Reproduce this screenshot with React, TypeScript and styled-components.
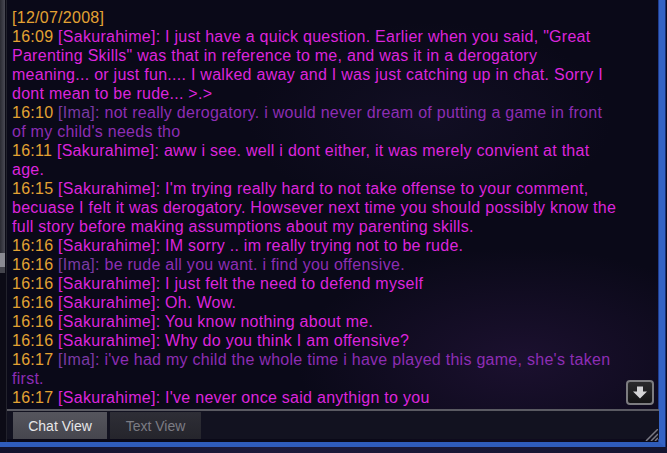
import styled, { createGlobalStyle } from 'styled-components'

type Speaker = 'saku' | 'ima'

interface Line {
  time: string
  who: Speaker
  text: string
}

const lines: Line[] = [
  { time: '16:09', who: 'saku', text: 'I just have a quick question. Earlier when you said, "Great Parenting Skills" was that in reference to me, and was it in a derogatory meaning... or just fun.... I walked away and I was just catching up in chat. Sorry I dont mean to be rude... >.>' },
  { time: '16:10', who: 'ima', text: 'not really derogatory. i would never dream of putting a game in front of my child\'s needs tho' },
  { time: '16:11', who: 'saku', text: 'aww i see. well i dont either, it was merely convient at that age.' },
  { time: '16:15', who: 'saku', text: 'I\'m trying really hard to not take offense to your comment, becuase I felt it was derogatory. Howsever next time you should possibly know the full story before making assumptions about my parenting skills.' },
  { time: '16:16', who: 'saku', text: 'IM sorry .. im really trying not to be rude.' },
  { time: '16:16', who: 'ima', text: 'be rude all you want. i find you offensive.' },
  { time: '16:16', who: 'saku', text: 'I just felt the need to defend myself' },
  { time: '16:16', who: 'saku', text: 'Oh. Wow.' },
  { time: '16:16', who: 'saku', text: 'You know nothing about me.' },
  { time: '16:16', who: 'saku', text: 'Why do you think I am offensive?' },
  { time: '16:17', who: 'ima', text: 'i\'ve had my child the whole time i have played this game, she\'s taken first.' },
  { time: '16:17', who: 'saku', text: 'I\'ve never once said anythign to you' },
]

const names: Record<Speaker, string> = {
  saku: 'Sakurahime',
  ima: 'Ima',
}

const App = () => {
  return (
    <>
      <GlobalStyle />
      <Screen>
        <Window>
          <Gutter>
            <Track />
            <Thumb />
            <TrackEnd />
          </Gutter>

          <Main>
            <Log>
              <Date>[12/07/2008]</Date>
              {lines.map((line, i) => (
                <Message key={i} $who={line.who}>
                  <Time>{line.time}</Time>{' '}
                  <Name $who={line.who}>[{names[line.who]}]</Name>: {line.text}
                </Message>
              ))}

              <ScrollDown>
                <svg width="16" height="13" viewBox="0 0 16 13">
                  <path d="M5 0.5 H11 V5.5 H15 L8 12.5 L1 5.5 H5 Z" fill="#d4d4d6" />
                </svg>
              </ScrollDown>
            </Log>

            <Tabs>
              <Tab $active>Chat View</Tab>
              <Tab>Text View</Tab>
            </Tabs>

            <Grip width="14" height="12" viewBox="0 0 14 12">
              <path d="M2 12 L14 0 M7 12 L14 5 M11 12 L14 9" stroke="#7a7a84" strokeWidth="1.5" />
            </Grip>
          </Main>
        </Window>
        <Footer />
      </Screen>
    </>
  )
}

export default App

const GlobalStyle = createGlobalStyle`
    body {
        margin: 0;
        background: #0d0c20;
    }
`

const Screen = styled.div`
    width: 667px;
    height: 453px;
    display: flex;
    flex-direction: column;
    overflow: hidden;
    font-family: "Liberation Sans", Arial, sans-serif;
`

const Window = styled.div`
    width: 659px;
    height: 442px;
    display: flex;
    border-right: 6px solid #3563c4;
    border-bottom: 5px solid #2f5cbc;
    box-shadow: inset -1px 0 0 #1f3c8e, 1px 0 0 #1b2f74, 0 1px 0 #1b2f74;
    background:
        radial-gradient(ellipse 320px 160px at 520px 360px, rgba(60, 30, 90, 0.35), transparent 70%),
        radial-gradient(ellipse 260px 140px at 430px 120px, rgba(40, 30, 70, 0.25), transparent 70%),
        #0a0918;
`

const Gutter = styled.div`
    width: 6px;
    display: flex;
    flex-direction: column;
    background: #0c0b16;
    border-right: 1px solid #22222c;
`

const Track = styled.div`
    height: 253px;
    width: 5px;
    background: linear-gradient(90deg, #2a2a32, #4a4a54);
`

const Thumb = styled.div`
    height: 14px;
    width: 5px;
    background: #8a8a92;
`

const TrackEnd = styled.div`
    height: 6px;
    width: 5px;
    background: #44444c;
`

const Main = styled.div`
    flex: 1;
    display: flex;
    flex-direction: column;
    position: relative;
`

const Log = styled.div`
    position: relative;
    height: 411px;
    box-sizing: border-box;
    padding: 8px 40px 0 5px;
    font-size: 16px;
    line-height: 19px;
    letter-spacing: 0.27px;
    border-bottom: 2px solid #5a5a62;
    overflow: hidden;
`

const Date = styled.div`
    color: #e3a233;
`

const Message = styled.div<{ $who: Speaker }>`
    color: ${p => (p.$who === 'ima' ? '#8d2db4' : '#dc25dc')};
`

const Time = styled.span`
    color: #e3a233;
`

const Name = styled.span<{ $who: Speaker }>`
    color: ${p => (p.$who === 'ima' ? '#7b3aa4' : '#dc25dc')};
`

const ScrollDown = styled.div`
    position: absolute;
    right: 5px;
    bottom: 4px;
    width: 24px;
    height: 21px;
    display: flex;
    align-items: center;
    justify-content: center;
    border: 2px solid #7c7c80;
    border-radius: 4px;
    background: linear-gradient(#2a2a2c, #141416);
`

const Tabs = styled.div`
    display: flex;
    gap: 3px;
    padding: 1px 0 0 6px;
    height: 27px;
    background: #121220;
`

const Tab = styled.div<{ $active?: boolean }>`
    display: flex;
    align-items: center;
    justify-content: center;
    width: ${p => (p.$active ? '94px' : '91px')};
    font-size: 14px;
    color: ${p => (p.$active ? '#e6e6e8' : '#7c7c84')};
    background: ${p => (p.$active ? 'linear-gradient(#55555d, #46464e)' : 'linear-gradient(#2e2e36, #25252c)')};
`

const Grip = styled.svg`
    position: absolute;
    right: 1px;
    bottom: 1px;
`

const Footer = styled.div`
    flex: 1;
    background: linear-gradient(90deg, #12122c, #1c1a3a 40%, #141430);
`
